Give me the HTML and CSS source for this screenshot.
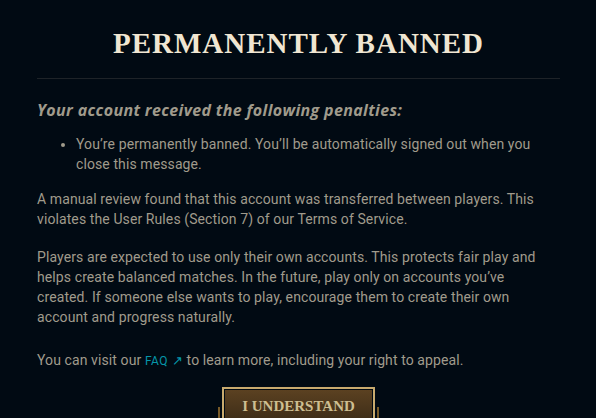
FILE: index.html
```html
<!DOCTYPE html>
<html lang="en">
<head>
<meta charset="utf-8">
<title>Permanently Banned</title>
<link rel="stylesheet" href="styles.css">
</head>
<body>
<div class="modal">
  <h1 class="title">PERMANENTLY BANNED</h1>
  <div class="divider"></div>
  <div class="content">
    <h2 class="subtitle">Your account received the following penalties:</h2>
    <ul class="penalties">
      <li>You’re permanently banned. You’ll be automatically signed out when you close this message.</li>
    </ul>
    <p class="para">A manual review found that this account was transferred between players. This violates the User Rules (Section 7) of our Terms of Service.</p>
    <p class="para para-2">Players are expected to use only their own accounts. This protects fair play and helps create balanced matches. In the future, play only on accounts you’ve created. If someone else wants to play, encourage them to create their own account and progress naturally.</p>
    <p class="para para-3">You can visit our <a class="link" href="#">FAQ <span class="arrow">↗</span></a> to learn more, including your right to appeal.</p>
  </div>
  <div class="actions">
    <button class="btn"><span class="btn-inner">I UNDERSTAND</span></button>
  </div>
</div>
</body>
</html>
```
FILE: styles.css
```css
html, body {
  margin: 0;
  padding: 0;
  background: #010a13;
  height: 100%;
  overflow: hidden;
}
.modal {
  padding: 0 36px 0 37px;
  display: flex;
  flex-direction: column;
}
.title {
  margin: 26px 0 0;
  text-align: center;
  font-family: "Liberation Serif", serif;
  font-weight: 700;
  font-size: 29px;
  line-height: 34px;
  letter-spacing: 1px;
  color: #f0e6d2;
}
.divider {
  margin-top: 18px;
  height: 1px;
  background: #1e2328;
}
.content {
  padding-right: 12px;
  font-family: Roboto, "Liberation Sans", sans-serif;
  font-size: 14px;
  line-height: 20px;
  letter-spacing: 0.1px;
  color: #a09b8c;
}
.subtitle {
  margin: 20px 0 0;
  font-family: "Open Sans", Roboto, sans-serif;
  font-style: italic;
  font-weight: 700;
  font-size: 16px;
  line-height: 22px;
  letter-spacing: 0.35px;
  color: #a09b8c;
}
.penalties {
  margin: 13px 0 0;
  padding-left: 39px;
}
.para {
  margin: 15px 0 0;
}
.para-2 {
  margin-top: 18px;
}
.para-3 {
  margin-top: 23px;
}
.link {
  color: #0596aa;
  text-decoration: none;
  font-size: 12px;
  letter-spacing: 0.5px;
}
.arrow {
  font-size: 13px;
}
.actions {
  display: flex;
  justify-content: center;
  margin-top: 16px;
}
.btn {
  position: relative;
  padding: 0;
  border: 2px solid #c8aa6e;
  border-bottom-color: #785a28;
  background: #010a13;
  width: 153px;
  height: 40px;
  cursor: pointer;
}
.btn::before, .btn::after {
  content: "";
  position: absolute;
  top: 18px;
  width: 2px;
  height: 20px;
  background: #785a28;
}
.btn::before { left: -6px; }
.btn::after { right: -6px; }
.btn-inner {
  display: block;
  margin: 1px;
  height: calc(100% - 2px);
  background: linear-gradient(#5b4121, #3a2a16);
  font-family: "Liberation Serif", serif;
  font-weight: 700;
  font-size: 15px;
  letter-spacing: 0;
  line-height: 32px;
  color: #cdbe91;
}
```
